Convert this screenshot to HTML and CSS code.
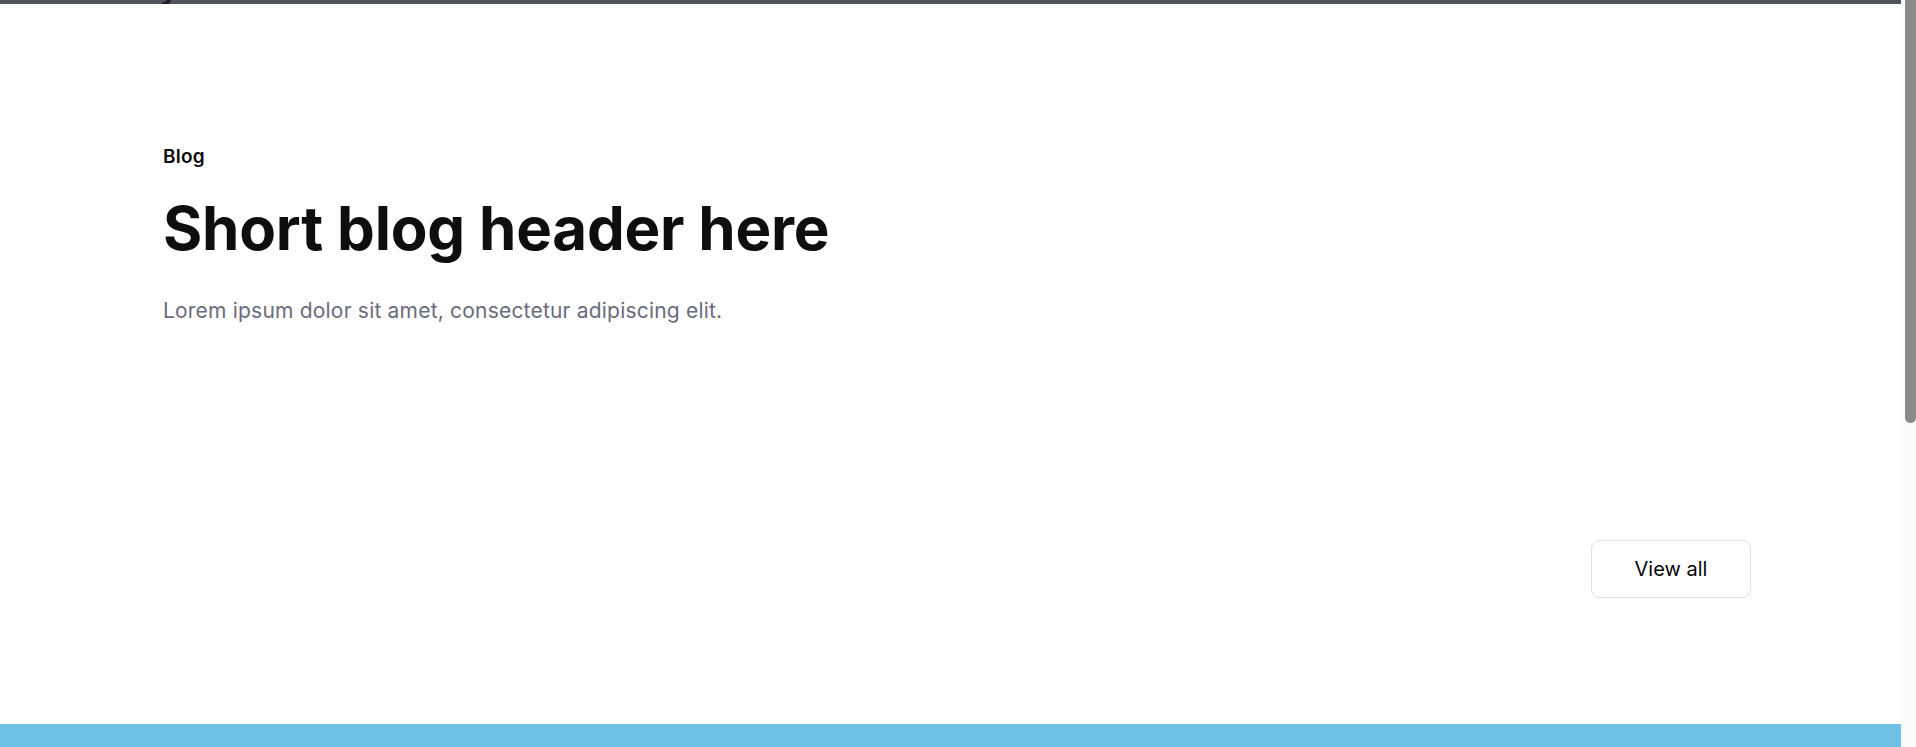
FILE: index.html
```html
<!DOCTYPE html>
<html lang="en">
<head>
    <meta charset="UTF-8">
    <meta name="viewport" content="width=device-width, initial-scale=1.0">
    <title>Blog</title>
    <link rel="stylesheet" href="styles.css">
</head>
<body>
    <div class="page">
        <div class="topbar">
            <span class="topbar-tail">y</span>
        </div>
        <section class="blog">
            <div class="blog-header">
                <p class="blog-tagline">Blog</p>
                <h1 class="blog-title">Short blog header here</h1>
                <p class="blog-text">Lorem ipsum dolor sit amet, consectetur adipiscing elit.</p>
            </div>
            <div class="blog-actions">
                <button type="button" class="btn-outline">View all</button>
            </div>
        </section>
        <section class="next-section"></section>
    </div>
    <div class="scrollbar">
        <div class="scrollbar-thumb"></div>
    </div>
</body>
</html>
```

FILE: styles.css
```css
/* Blog section */
body {
    font-family: 'Inter', 'Liberation Sans', sans-serif;
    margin: 0;
    padding: 0;
    background-color: #ffffff;
    color: #0c0c0e;
}

.page {
    margin-right: 15px;
}

/* fake scrollbar, as in the screenshot */
.scrollbar {
    position: fixed;
    top: 0;
    right: 0;
    width: 15px;
    height: 100vh;
    background-color: #fbfbfb;
    display: flex;
    justify-content: flex-end;
}

.scrollbar-thumb {
    width: 11px;
    height: 423px;
    background-color: #8a8a8a;
    border-radius: 0 0 6px 6px;
}

.topbar {
    position: relative;
    height: 4px;
    background-color: #50555d;
    overflow: hidden;
}

.topbar-tail {
    position: absolute;
    left: 160px;
    top: -27px;
    font-size: 30px;
    font-weight: 700;
    line-height: 30px;
    color: #1e1f22;
}

.blog {
    padding: 139px 150px 126px 163px;
}

.blog-tagline {
    margin: 0;
    font-size: 19px;
    line-height: 27px;
    font-weight: 600;
    letter-spacing: 0.2px;
    color: #0a0a0a;
}

.blog-title {
    margin: 22px 0 0;
    font-size: 60px;
    line-height: 72px;
    font-weight: 700;
    letter-spacing: -0.2px;
    color: #0e0e10;
}

.blog-text {
    margin: 32px 0 0;
    font-size: 21px;
    line-height: 30px;
    letter-spacing: 0.2px;
    color: #6a6b7c;
}

.blog-actions {
    display: flex;
    justify-content: flex-end;
    margin-top: 214px;
}

.btn-outline {
    width: 160px;
    height: 58px;
    font-family: inherit;
    font-size: 20px;
    color: #050505;
    background-color: #ffffff;
    border: 1px solid #e2e2e6;
    border-radius: 8px;
    cursor: pointer;
}

.next-section {
    height: 600px;
    background-color: #6ec0e4;
}
```
